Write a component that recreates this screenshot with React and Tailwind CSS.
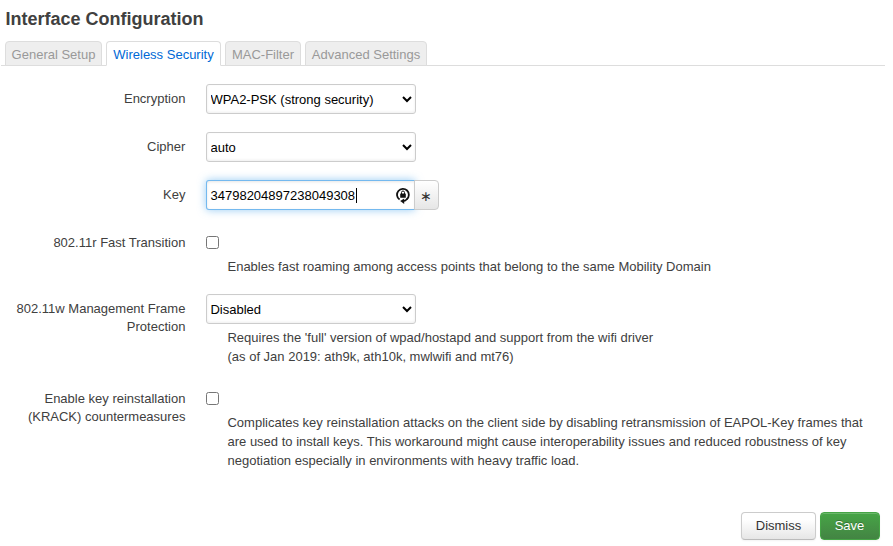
const SELECT =
  'block h-[30px] w-[210px] rounded-[3px] border border-[#ccc] bg-white py-0 pl-0 pr-px -indent-[0.5px] text-[13px] text-black shadow-[inset_0_-1px_3px_rgba(0,0,0,0.07)]';

const TABS = [
  { label: 'General Setup', width: 'w-[97px]' },
  { label: 'Wireless Security', width: 'w-[115px]', active: true },
  { label: 'MAC-Filter', width: 'w-[76px]' },
  { label: 'Advanced Settings', width: 'w-[122px]' },
];

function Tab({ label, width, active }) {
  const state = active
    ? 'border-b-white bg-white text-[#0069d6]'
    : 'border-b-[#ddd] bg-[#eee] text-[#999]';
  return (
    <li className={`${width} h-[25px] shrink-0 whitespace-nowrap rounded-t-[4px] border border-[#ddd] text-center leading-[25px] ${state}`}>
      {label}
    </li>
  );
}

function Row({ label, height, children }) {
  return (
    <div className={`flex ${height}`}>
      <label className="w-[185.4px] shrink-0 pt-[6px] text-right leading-[18px]">{label}</label>
      <div className="ml-[20.6px] flex-1">{children}</div>
    </div>
  );
}

function Help({ className, children }) {
  return <div className={`ml-[21.5px] whitespace-nowrap leading-[19px] ${className}`}>{children}</div>;
}

function Select({ value }) {
  return (
    <select className={SELECT} defaultValue={value}>
      <option>{value}</option>
    </select>
  );
}

function PasswordIcon() {
  return (
    <svg width="14" height="17" viewBox="0 0 14 17" fill="none" stroke="#111">
      <path d="M3.6 12.6A5.9 5.9 0 1 1 10.8 12.2" strokeWidth="1.8" />
      <path d="M11.2 11.8Q9.6 14 7.2 14.1" strokeWidth="1.6" />
      <path d="M8.2 11.6V17L4.2 14Z" fill="#111" stroke="none" />
      <path d="M5.5 7V5.5a1.5 1.5 0 0 1 3 0V7" strokeWidth="1" />
      <rect x="4.2" y="6.5" width="5.6" height="4.3" rx="0.4" fill="#111" stroke="none" />
    </svg>
  );
}

export default function App() {
  return (
    <div className="h-[546px] w-[893px] overflow-hidden bg-white font-['Liberation_Sans',Arial,sans-serif] text-[13px] leading-[18px] text-[#404040]">
      <h4 className="h-[41px] pl-[5.5px] pt-px text-[18px] font-bold leading-[36px]">Interface Configuration</h4>
      <ul className="ml-px mr-[8px] flex h-[25px] gap-1 pl-1 shadow-[inset_0_-1px_0_#ddd]">
        {TABS.map((tab) => (
          <Tab key={tab.label} {...tab} />
        ))}
      </ul>
      <div className="pt-[18px]">
        <Row label="Encryption" height="h-[48px]">
          <Select value="WPA2-PSK (strong security)" />
        </Row>
        <Row label="Cipher" height="h-[48px]">
          <Select value="auto" />
        </Row>
        <Row label="Key" height="h-[48px]">
          <div className="flex">
            <div className="flex h-[30px] w-[209px] items-center rounded-l-[3px] border border-r-0 border-[rgba(82,168,236,0.8)] bg-white pl-[3.5px] pr-[5px] text-black shadow-[inset_0_1px_3px_rgba(0,0,0,0.1),0_0_8px_rgba(82,168,236,0.6)]">
              <span className="pt-[2px]">34798204897238049308</span>
              <span className="ml-[0.8px] mt-px h-[15px] w-px bg-black" />
              <span className="ml-auto"><PasswordIcon /></span>
            </div>
            <button className="relative -ml-px h-[30px] w-[25px] rounded-r-[4px] border border-[#ccc] bg-gradient-to-b from-white to-[#e6e6e6] pt-[2px] text-[14px] leading-[18px] text-[#333]">∗</button>
          </div>
        </Row>
        <Row label="802.11r Fast Transition" height="h-[66px]">
          <input type="checkbox" className="mt-[8px] block size-[13px]" />
          <Help className="mt-[8px]">Enables fast roaming among access points that belong to the same Mobility Domain</Help>
        </Row>
        <Row label={<>802.11w Management Frame<br />Protection</>} height="h-[90px]">
          <Select value="Disabled" />
          <Help className="mt-[4px]">
            Requires the 'full' version of wpad/hostapd and support from the wifi driver
            <br />
            (as of Jan 2019: ath9k, ath10k, mwlwifi and mt76)
          </Help>
        </Row>
        <Row label={<>Enable key reinstallation<br />(KRACK) countermeasures</>} height="h-[128px]">
          <input type="checkbox" className="mt-[8px] block size-[13px]" />
          <Help className="mt-[8px]">
            Complicates key reinstallation attacks on the client side by disabling retransmission of EAPOL-Key frames that
            <br />
            are used to install keys. This workaround might cause interoperability issues and reduced robustness of key
            <br />
            negotiation especially in environments with heavy traffic load.
          </Help>
        </Row>
      </div>
      <div className="flex justify-end gap-1 pr-[13px]">
        <button className="h-[28px] w-[75px] rounded-[4px] border border-[#ccc] border-b-[#bbb] bg-gradient-to-b from-white from-25% to-[#e6e6e6] text-[13px] text-[#333] shadow-[inset_0_1px_0_rgba(255,255,255,0.2),0_1px_2px_rgba(0,0,0,0.05)]">Dismiss</button>
        <button className="h-[28px] w-[60px] rounded-[4px] border border-[#46a546] bg-gradient-to-b from-[#46a546] to-[#438443] pr-px text-[13px] text-white shadow-[inset_0_1px_0_rgba(255,255,255,0.2),0_1px_2px_rgba(0,0,0,0.05)] [text-shadow:0_-1px_0_rgba(0,0,0,0.25)]">Save</button>
      </div>
    </div>
  );
}
